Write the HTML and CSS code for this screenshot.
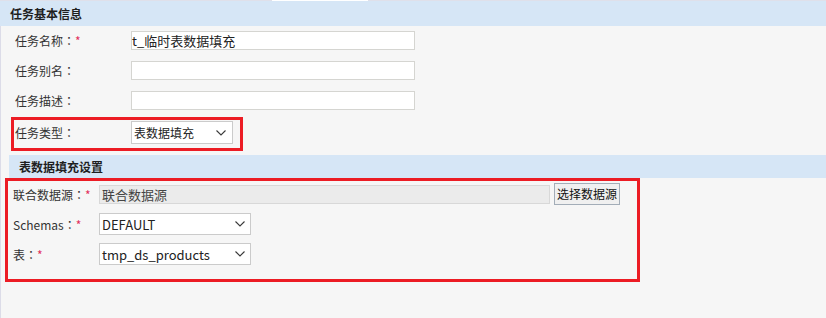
FILE: index.html
```html
<!DOCTYPE html>
<html lang="zh-CN">
<head>
<meta charset="utf-8">
<title>任务设置</title>
<link rel="stylesheet" href="styles.css">
</head>
<body>
<div class="topstrip"><span class="tab"></span></div>
<div class="sec-head">任务基本信息</div>
<div class="page">
  <div class="sec-body">
    <div class="row r1">
      <span class="label">任务名称<span class="colon" lang="zh-TW">：</span><em>*</em></span>
      <div class="input">t_临时表数据填充</div>
    </div>
    <div class="row r2">
      <span class="label">任务别名<span class="colon" lang="zh-TW">：</span></span>
      <div class="input"></div>
    </div>
    <div class="row r3">
      <span class="label">任务描述<span class="colon" lang="zh-TW">：</span></span>
      <div class="input"></div>
    </div>
    <div class="hl-box small">
      <div class="row">
        <span class="label">任务类型<span class="colon" lang="zh-TW">：</span></span>
        <div class="select s1"><span>表数据填充</span><svg width="10" height="6" viewBox="0 0 10 6"><polyline points="0.5,0.5 5,5 9.5,0.5" fill="none" stroke="#3a3a3a" stroke-width="1.1"/></svg></div>
      </div>
    </div>
  </div>
  <div class="sec-head sub">表数据填充设置</div>
  <div class="hl-box big">
    <div class="row2 first">
      <span class="label2">联合数据源<span class="colon" lang="zh-TW">：</span><em>*</em></span>
      <div class="ro-input">联合数据源</div>
      <button class="btn" type="button">选择数据源</button>
    </div>
    <div class="row2">
      <span class="label2">Schemas<span class="colon" lang="zh-TW">：</span><em>*</em></span>
      <div class="select s2"><span>DEFAULT</span><svg width="10" height="6" viewBox="0 0 10 6"><polyline points="0.5,0.5 5,5 9.5,0.5" fill="none" stroke="#3a3a3a" stroke-width="1.1"/></svg></div>
    </div>
    <div class="row2">
      <span class="label2">表<span class="colon" lang="zh-TW">：</span><em>*</em></span>
      <div class="select s2"><span>tmp_ds_products</span><svg width="10" height="6" viewBox="0 0 10 6"><polyline points="0.5,0.5 5,5 9.5,0.5" fill="none" stroke="#3a3a3a" stroke-width="1.1"/></svg></div>
    </div>
  </div>
</div>
</body>
</html>
```
FILE: styles.css
```css
html, body {
  margin: 0;
  padding: 0;
}
body {
  width: 826px;
  height: 318px;
  overflow: hidden;
  background: #f6f6f6;
  font-family: "Noto Sans CJK SC", "Noto Sans", sans-serif;
  font-size: 12px;
  color: #333;
}
.topstrip {
  height: 1px;
  background: #dfe0ea;
  display: flex;
}
.topstrip .tab {
  margin-left: 272px;
  width: 96px;
  height: 1px;
  background: #ffffff;
}
.sec-head {
  height: 25px;
  line-height: 25px;
  background: #d6e6f6;
  font-weight: bold;
  font-size: 12px;
  color: #1f1f1f;
  padding-left: 10px;
}
.page {
  border-left: 1px solid #dcdce8;
  height: 292px;
}
.sec-body {
  padding-top: 5px;
  display: flex;
  flex-direction: column;
  align-items: flex-start;
}
.row {
  display: flex;
  align-items: center;
}
.sec-body > .row {
  margin-left: 14px;
  height: 19px;
}
.r1, .r2 {
  margin-bottom: 11px;
}
.r3 {
  margin-bottom: 7px;
}
.label {
  width: 116px;
  flex: none;
  color: #333;
}
.colon {
  font-family: "Noto Sans CJK TC", "Noto Sans CJK SC", sans-serif;
}
em {
  font-style: normal;
  color: #e2305c;
}
.input {
  box-sizing: border-box;
  width: 284px;
  height: 19px;
  background: #fff;
  border: 1px solid #d5d5d1;
  font-size: 13px;
  line-height: 17px;
  color: #222;
  padding-left: 0;
}
.hl-box {
  border: 3px solid #ec1c24;
  box-sizing: border-box;
}
.hl-box.small {
  margin-left: 10px;
  padding: 1px 7px 4px 1px;
}
.hl-box.small .row {
  height: 23px;
}
.select {
  box-sizing: border-box;
  background: #fff;
  border: 1px solid #cbcbcb;
  display: flex;
  align-items: center;
  justify-content: space-between;
  padding: 0 6px 0 2px;
  font-size: 13px;
  color: #222;
}
.select svg {
  flex: none;
  display: block;
}
.s1 {
  width: 102px;
  height: 23px;
  font-size: 12px;
}
.s2 {
  width: 152px;
  height: 22px;
  padding-right: 5px;
}
.sec-head.sub {
  margin-top: 4px;
  margin-left: 8px;
  height: 23px;
  line-height: 23px;
  padding-left: 10px;
}
.hl-box.big {
  margin-left: 4px;
  width: 635px;
  padding: 2px 0 14px 5px;
}
.row2 {
  display: flex;
  align-items: center;
  height: 22px;
  margin-top: 8px;
}
.row2.first {
  margin-top: 0;
}
.label2 {
  width: 86px;
  flex: none;
  color: #333;
}
.ro-input {
  box-sizing: border-box;
  width: 451px;
  height: 19px;
  background: #ebebeb;
  border: 1px solid #d8d8d8;
  padding-left: 2px;
  font-size: 13px;
  line-height: 17px;
  color: #444;
}
.btn {
  box-sizing: border-box;
  margin-left: 4px;
  width: 66px;
  height: 22px;
  padding: 0 2px;
  background: #f0f0f0;
  border: 1px solid #a3adb8;
  border-radius: 0;
  font-family: "Noto Sans CJK SC", sans-serif;
  font-size: 12px;
  color: #111;
  line-height: 20px;
  white-space: nowrap;
}
```
